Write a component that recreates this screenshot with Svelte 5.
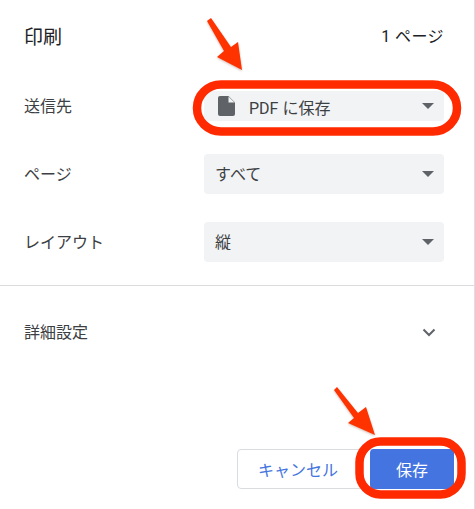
<script lang="ts">
  const rows = [
    { label: 'ページ', value: 'すべて' },
    { label: 'レイアウト', value: '縦' }
  ];
</script>

<div class="panel">
  <header class="head">
    <h1>印刷</h1>
    <span class="count">1 ページ</span>
  </header>

  <div class="settings">
    <div class="row">
      <span class="label">送信先</span>
      <div class="select short">
        <svg class="doc" viewBox="0 0 17 20" width="17" height="20">
          <path d="M2 0H10.5L17 6.5V18a2 2 0 0 1-2 2H2a2 2 0 0 1-2-2V2a2 2 0 0 1 2-2Z" fill="#5f6368" />
          <path d="M10.5 0.5V6.5H16.5Z" fill="#f1f3f4" />
        </svg>
        <span class="value">PDF に保存</span>
        <i class="caret"></i>
      </div>
    </div>
    {#each rows as row}
      <div class="row">
        <span class="label">{row.label}</span>
        <div class="select">
          <span class="value">{row.value}</span>
          <i class="caret"></i>
        </div>
      </div>
    {/each}
  </div>

  <div class="more">
    <span class="label">詳細設定</span>
    <svg class="chevron" viewBox="0 0 14 9" width="14" height="9">
      <path d="M1.5 1.5 7 7l5.5-5.5" fill="none" stroke="#5f6368" stroke-width="2" />
    </svg>
  </div>

  <footer class="actions">
    <button class="btn cancel">キャンセル</button>
    <button class="btn save">保存</button>
  </footer>

  <!-- red annotations drawn on top of the screenshot -->
  <svg class="marks" viewBox="0 0 475 509" width="475" height="509">
    <rect x="197" y="84.5" width="260" height="47" rx="24" class="ring" />
    <rect x="359.5" y="441.5" width="102" height="53" rx="21" class="ring" />
    <polygon points="207,21 211,18 231,47 238,42 242,70 217,57 224,51" class="arrow" />
    <polygon points="334,390 337,387 358,413 366,407 375,435 348,423 354,418" class="arrow" />
  </svg>
</div>

<style>
  :global(body) {
    background: #fff;
  }

  .panel {
    position: relative;
    box-sizing: border-box;
    width: 475px;
    height: 509px;
    border-right: 1px solid #dfdfdf;
    display: flex;
    flex-direction: column;
    font-family: Roboto, "Noto Sans CJK JP", sans-serif;
    color: #3c4043;
    overflow: hidden;
  }

  .head {
    display: flex;
    justify-content: space-between;
    align-items: center;
    height: 40px;
    margin-top: 15px;
    padding: 0 30px 0 24px;
  }

  h1 {
    margin: 0;
    font-size: 19px;
    font-weight: 400;
    color: #202124;
  }

  .count {
    font-size: 16px;
    letter-spacing: 0.4px;
    color: #202124;
  }

  .settings {
    display: flex;
    flex-direction: column;
    gap: 28px;
    margin-top: 31px;
    padding: 0 30px 0 24px;
  }

  .row {
    display: grid;
    grid-template-columns: 180px 240px;
    align-items: center;
    height: 40px;
  }

  .label {
    padding-top: 2px;
    font-size: 16px;
    line-height: 24px;
  }

  .select {
    display: flex;
    align-items: center;
    box-sizing: border-box;
    height: 40px;
    padding: 0 8px 0 11px;
    background: #f1f3f4;
    border-radius: 4px;
  }

  .select.short {
    height: 30px;
    padding-left: 14px;
  }

  .doc {
    margin-right: 14px;
  }

  .value {
    flex: 1;
    padding-top: 2px;
    font-size: 16px;
    line-height: 20px;
  }

  .short .value {
    padding-top: 6px;
  }

  .caret {
    width: 0;
    height: 0;
    margin-right: 2px;
    border-left: 6px solid transparent;
    border-right: 6px solid transparent;
    border-top: 6px solid #5f6368;
  }

  .more {
    display: flex;
    justify-content: space-between;
    align-items: center;
    height: 24px;
    margin-top: 23px;
    padding: 34px 38px 0 24px;
    border-top: 1px solid #dadce0;
  }

  .actions {
    display: flex;
    justify-content: flex-end;
    margin-top: 105px;
    padding-right: 20px;
  }

  .btn {
    height: 40px;
    font-family: inherit;
    font-size: 16px;
    border-radius: 4px;
    padding: 0;
  }

  .cancel {
    width: 140px;
    margin-right: -7px;
    padding-right: 18px;
    background: #fff;
    color: #4374e0;
    border: 1px solid #dadce0;
  }

  .save {
    position: relative;
    width: 84px;
    background: #4374e0;
    color: #fff;
    border: none;
  }

  .marks {
    position: absolute;
    left: 0;
    top: 0;
    pointer-events: none;
  }

  .ring {
    fill: none;
    stroke: #ff2a00;
    stroke-width: 8.5;
  }

  .arrow {
    fill: #ff3300;
    filter: drop-shadow(0 1px 1px rgba(120, 60, 40, 0.35));
  }
</style>
